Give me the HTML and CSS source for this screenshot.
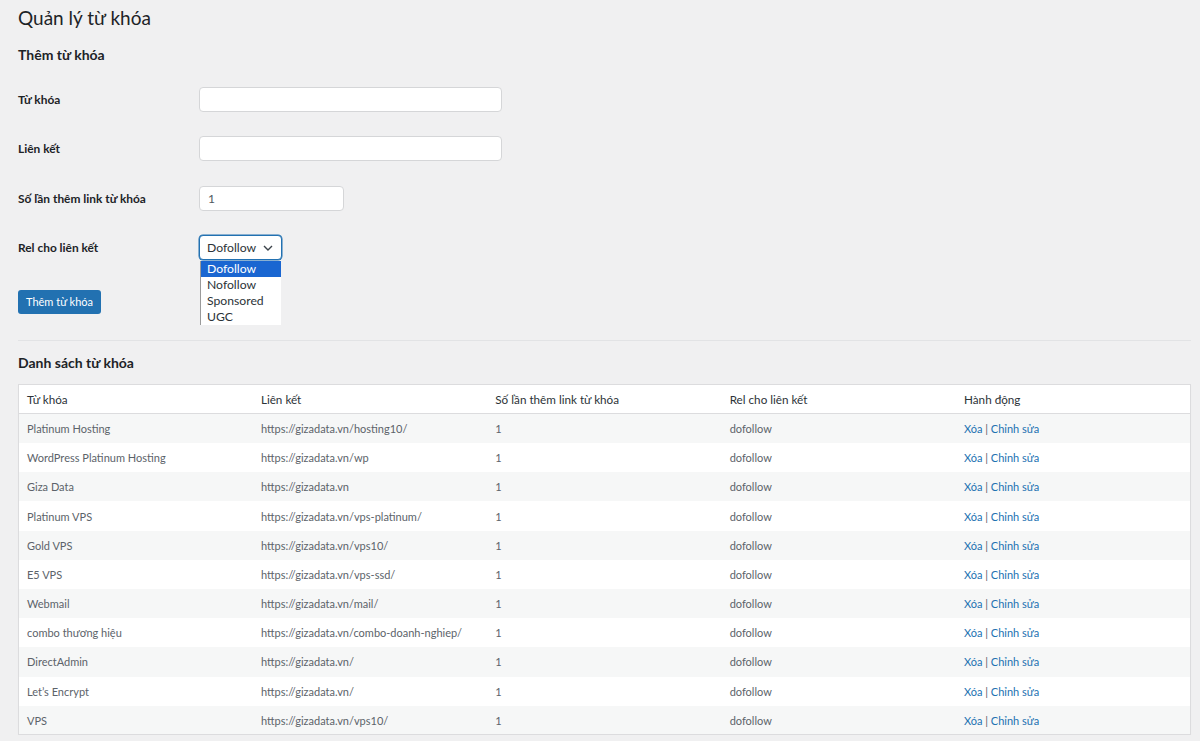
FILE: index.html
```html
<!DOCTYPE html>
<html lang="vi">
<head>
<meta charset="utf-8">
<title>Quản lý từ khóa</title>
<link rel="stylesheet" href="styles.css">
</head>
<body>
<div class="wrap">
  <h1 class="page-title">Quản lý từ khóa</h1>
  <h2 class="section-title">Thêm từ khóa</h2>
  <form class="form">
    <div class="form-row">
      <label class="form-label">Từ khóa</label>
      <div class="input input-wide"></div>
    </div>
    <div class="form-row">
      <label class="form-label">Liên kết</label>
      <div class="input input-wide"></div>
    </div>
    <div class="form-row">
      <label class="form-label">Số lần thêm link từ khóa</label>
      <div class="input input-num">1</div>
    </div>
    <div class="form-row">
      <label class="form-label">Rel cho liên kết</label>
      <div class="select-wrap">
        <div class="select">
          <span>Dofollow</span>
          <svg class="chev" width="10" height="6" viewBox="0 0 10 6"><path d="M1 1l4 4 4-4" fill="none" stroke="#3c434a" stroke-width="1.4"/></svg>
        </div>
        <ul class="dropdown">
          <li class="opt opt-active">Dofollow</li>
          <li class="opt">Nofollow</li>
          <li class="opt">Sponsored</li>
          <li class="opt">UGC</li>
        </ul>
      </div>
    </div>
    <div class="btn-row"><span class="button">Thêm từ khóa</span></div>
  </form>
  <hr class="sep">
  <h2 class="section-title list-title">Danh sách từ khóa</h2>
  <table class="kw-table">
    <thead>
      <tr><th>Từ khóa</th><th>Liên kết</th><th>Số lần thêm link từ khóa</th><th>Rel cho liên kết</th><th>Hành động</th></tr>
    </thead>
    <tbody>
      <tr><td>Platinum Hosting</td><td>https://gizadata.vn/hosting10/</td><td>1</td><td>dofollow</td><td><a class="lnk">Xóa</a> | <a class="lnk">Chỉnh sửa</a></td></tr>
      <tr><td>WordPress Platinum Hosting</td><td>https://gizadata.vn/wp</td><td>1</td><td>dofollow</td><td><a class="lnk">Xóa</a> | <a class="lnk">Chỉnh sửa</a></td></tr>
      <tr><td>Giza Data</td><td>https://gizadata.vn</td><td>1</td><td>dofollow</td><td><a class="lnk">Xóa</a> | <a class="lnk">Chỉnh sửa</a></td></tr>
      <tr><td>Platinum VPS</td><td>https://gizadata.vn/vps-platinum/</td><td>1</td><td>dofollow</td><td><a class="lnk">Xóa</a> | <a class="lnk">Chỉnh sửa</a></td></tr>
      <tr><td>Gold VPS</td><td>https://gizadata.vn/vps10/</td><td>1</td><td>dofollow</td><td><a class="lnk">Xóa</a> | <a class="lnk">Chỉnh sửa</a></td></tr>
      <tr><td>E5 VPS</td><td>https://gizadata.vn/vps-ssd/</td><td>1</td><td>dofollow</td><td><a class="lnk">Xóa</a> | <a class="lnk">Chỉnh sửa</a></td></tr>
      <tr><td>Webmail</td><td>https://gizadata.vn/mail/</td><td>1</td><td>dofollow</td><td><a class="lnk">Xóa</a> | <a class="lnk">Chỉnh sửa</a></td></tr>
      <tr><td>combo thương hiệu</td><td>https://gizadata.vn/combo-doanh-nghiep/</td><td>1</td><td>dofollow</td><td><a class="lnk">Xóa</a> | <a class="lnk">Chỉnh sửa</a></td></tr>
      <tr><td>DirectAdmin</td><td>https://gizadata.vn/</td><td>1</td><td>dofollow</td><td><a class="lnk">Xóa</a> | <a class="lnk">Chỉnh sửa</a></td></tr>
      <tr><td>Let’s Encrypt</td><td>https://gizadata.vn/</td><td>1</td><td>dofollow</td><td><a class="lnk">Xóa</a> | <a class="lnk">Chỉnh sửa</a></td></tr>
      <tr><td>VPS</td><td>https://gizadata.vn/vps10/</td><td>1</td><td>dofollow</td><td><a class="lnk">Xóa</a> | <a class="lnk">Chỉnh sửa</a></td></tr>
    </tbody>
  </table>
</div>
</body>
</html>
```

FILE: styles.css
```css
* { box-sizing: border-box; }
html, body { margin: 0; padding: 0; }
body {
  background: #f0f0f1;
  color: #1d2327;
  font-family: Lato, "Noto Sans", sans-serif;
  font-size: 13px;
  overflow: hidden;
}
.wrap { margin: 0 9px 0 18px; }
.page-title {
  margin: 0;
  padding: 4px 0 0;
  font-size: 19px;
  font-weight: 400;
  line-height: 28px;
  color: #1d2327;
}
.section-title {
  margin: 13px 0 0;
  font-size: 14px;
  font-weight: 700;
  line-height: 20px;
  color: #1d2327;
}
.form { margin-top: 10px; }
.form-row {
  display: flex;
  align-items: center;
  height: 49.3px;
}
.form-label {
  width: 181px;
  font-weight: 700;
  font-size: 11.9px;
  color: #1d2327;
}
.input {
  height: 25px;
  background: #fff;
  border: 1px solid #d5d6d8;
  border-radius: 4px;
  padding: 0 8px;
  line-height: 23px;
  font-size: 12px;
  color: #50575e;
}
.input-wide { width: 303px; }
.input-num { width: 145px; }
.select-wrap { position: relative; }
.select {
  width: 83px;
  height: 25px;
  background: #fff;
  border: 1px solid #2271b1;
  box-shadow: 0 0 0 0.5px #2271b1;
  border-radius: 4px;
  padding: 0 8px 0 7px;
  display: flex;
  align-items: center;
  justify-content: space-between;
  font-size: 12.2px;
  color: #2c3338;
}
.dropdown {
  position: absolute;
  left: 1px;
  top: 26px;
  width: 81px;
  margin: 0;
  padding: 0;
  list-style: none;
  background: #fff;
  border-left: 1px solid #9a9a9a;
  z-index: 5;
}
.opt {
  height: 16px;
  line-height: 16px;
  padding-left: 6px;
  font-size: 12.2px;
  color: #2c3338;
}
.opt-active { background: #1a66d1; color: #fff; }
.btn-row { margin-top: 18px; }
.button {
  display: inline-block;
  height: 24px;
  line-height: 24px;
  padding: 0 8px;
  background: #2271b1;
  color: #fff;
  border-radius: 3px;
  font-size: 11px;
}
.sep {
  margin: 26px 0 0;
  border: 0;
  border-top: 1px solid #e2e3e5;
  height: 0;
}
.list-title { margin-top: 12px; }
.kw-table {
  margin-top: 11px;
  width: 100%;
  border-collapse: collapse;
  table-layout: fixed;
  background: #fff;
  border: 1px solid #dcdcde;
  box-shadow: 0 1px 1px rgba(0,0,0,.04);
}
.kw-table th, .kw-table td {
  text-align: left;
  padding: 0 8px;
  height: 29.2px;
  font-weight: 400;
  white-space: nowrap;
}
.kw-table th {
  color: #2c3338;
  font-size: 11.7px;
  border-bottom: 1px solid #dcdcde;
}
.kw-table td { color: #5c636a; font-size: 11px; }
.kw-table tbody tr:nth-child(odd) { background: #f6f7f7; }
.lnk { color: #2271b1; text-decoration: none; }
```
